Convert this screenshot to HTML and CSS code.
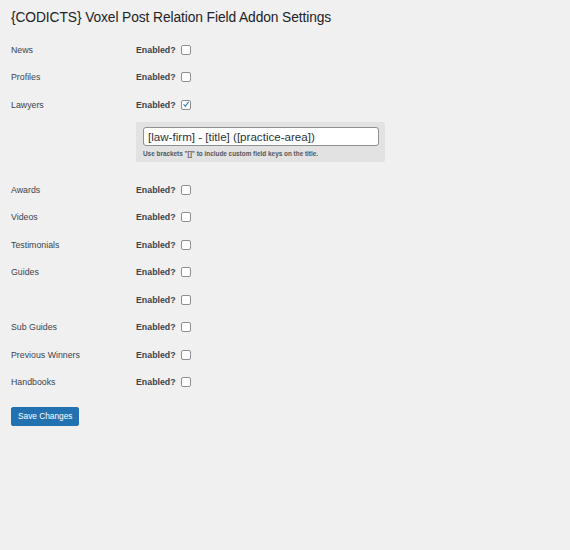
FILE: index.html
```html
<!DOCTYPE html>
<html lang="en">
<head>
    <meta charset="UTF-8">
    <meta name="viewport" content="width=device-width, initial-scale=1.0">
    <title>{CODICTS} Voxel Post Relation Field Addon Settings</title>
    <link rel="stylesheet" href="styles.css">
</head>
<body>
    <div class="wrap">
        <h1>{CODICTS} Voxel Post Relation Field Addon Settings</h1>

        <form class="settings">
            <div class="form-table">
                <div class="row">
                    <div class="th">News</div>
                    <div class="td"><label class="enabled">Enabled? <span class="box"></span></label></div>
                </div>
                <div class="row">
                    <div class="th">Profiles</div>
                    <div class="td"><label class="enabled">Enabled? <span class="box"></span></label></div>
                </div>
                <div class="row">
                    <div class="th">Lawyers</div>
                    <div class="td">
                        <label class="enabled">Enabled?
                            <span class="box checked">
                                <svg viewBox="0 0 10 10" width="10" height="10"><path d="M2.3 5.2 L4.2 7.2 L7.9 2.4" fill="none" stroke="#2271b1" stroke-width="1.3" stroke-linecap="round" stroke-linejoin="round"/></svg>
                            </span>
                        </label>
                    </div>
                </div>
                <div class="row-extra">
                    <div class="title-format">
                        <input type="text" class="title-input" value="[law-firm] - [title] ([practice-area])">
                        <p class="description">Use brackets "[]" to include custom field keys on the title.</p>
                    </div>
                </div>
                <div class="row">
                    <div class="th">Awards</div>
                    <div class="td"><label class="enabled">Enabled? <span class="box"></span></label></div>
                </div>
                <div class="row">
                    <div class="th">Videos</div>
                    <div class="td"><label class="enabled">Enabled? <span class="box"></span></label></div>
                </div>
                <div class="row">
                    <div class="th">Testimonials</div>
                    <div class="td"><label class="enabled">Enabled? <span class="box"></span></label></div>
                </div>
                <div class="row">
                    <div class="th">Guides</div>
                    <div class="td"><label class="enabled">Enabled? <span class="box"></span></label></div>
                </div>
                <div class="row">
                    <div class="th"></div>
                    <div class="td"><label class="enabled">Enabled? <span class="box"></span></label></div>
                </div>
                <div class="row">
                    <div class="th">Sub Guides</div>
                    <div class="td"><label class="enabled">Enabled? <span class="box"></span></label></div>
                </div>
                <div class="row">
                    <div class="th">Previous Winners</div>
                    <div class="td"><label class="enabled">Enabled? <span class="box"></span></label></div>
                </div>
                <div class="row">
                    <div class="th">Handbooks</div>
                    <div class="td"><label class="enabled">Enabled? <span class="box"></span></label></div>
                </div>
            </div>

            <p class="submit"><button type="button" class="button-primary">Save Changes</button></p>
        </form>
    </div>
</body>
</html>
```

FILE: styles.css
```css
html, body {
    margin: 0;
    background: #f0f0f1;
}
body {
    font-family: "Liberation Sans", Arial, sans-serif;
    color: #3c434a;
    font-size: 8.8px;
    height: 550px;
}
.wrap {
    padding: 8px 11px 0 11px;
}
h1 {
    margin: 0;
    font-size: 13.8px;
    font-weight: 400;
    line-height: 20px;
    color: #1d2327;
    letter-spacing: -0.1px;
}
.form-table {
    margin-top: 8px;
}
.row {
    display: flex;
    align-items: center;
    height: 27.5px;
}
.th {
    width: 125px;
    color: #3c434a;
}
.td {
    display: flex;
    align-items: center;
}
.enabled {
    display: flex;
    align-items: center;
    gap: 5px;
    font-weight: 700;
    color: #3c434a;
}
.box {
    display: inline-flex;
    align-items: center;
    justify-content: center;
    width: 8px;
    height: 8px;
    border: 1px solid #8c8f94;
    border-radius: 2px;
    background: #fff;
}
.box svg {
    width: 9px;
    height: 9px;
}
.row-extra {
    height: 57.5px;
    padding-left: 125px;
    padding-top: 3px;
    box-sizing: border-box;
}
.title-format {
    width: 249px;
    height: 40px;
    box-sizing: border-box;
    background: #e2e2e3;
    border-radius: 2px;
    padding: 5px 6px 0 7px;
}
.title-input {
    display: block;
    width: 236px;
    height: 19px;
    box-sizing: border-box;
    margin: 0;
    padding: 0 4px;
    border: 1px solid #8c8f94;
    border-radius: 3px;
    background: #fff;
    font-family: "Liberation Sans", Arial, sans-serif;
    font-size: 11.6px;
    color: #2c3338;
}
.description {
    margin: 4px 0 0 0;
    font-size: 6.4px;
    font-weight: 700;
    color: #50575e;
}
.submit {
    margin: 11px 0 0 0;
}
.button-primary {
    height: 18.5px;
    padding: 0 6px;
    border: 1px solid #2271b1;
    border-radius: 2px;
    background: #2271b1;
    color: #fff;
    font-family: "Liberation Sans", Arial, sans-serif;
    font-size: 8.3px;
    cursor: pointer;
}
```
